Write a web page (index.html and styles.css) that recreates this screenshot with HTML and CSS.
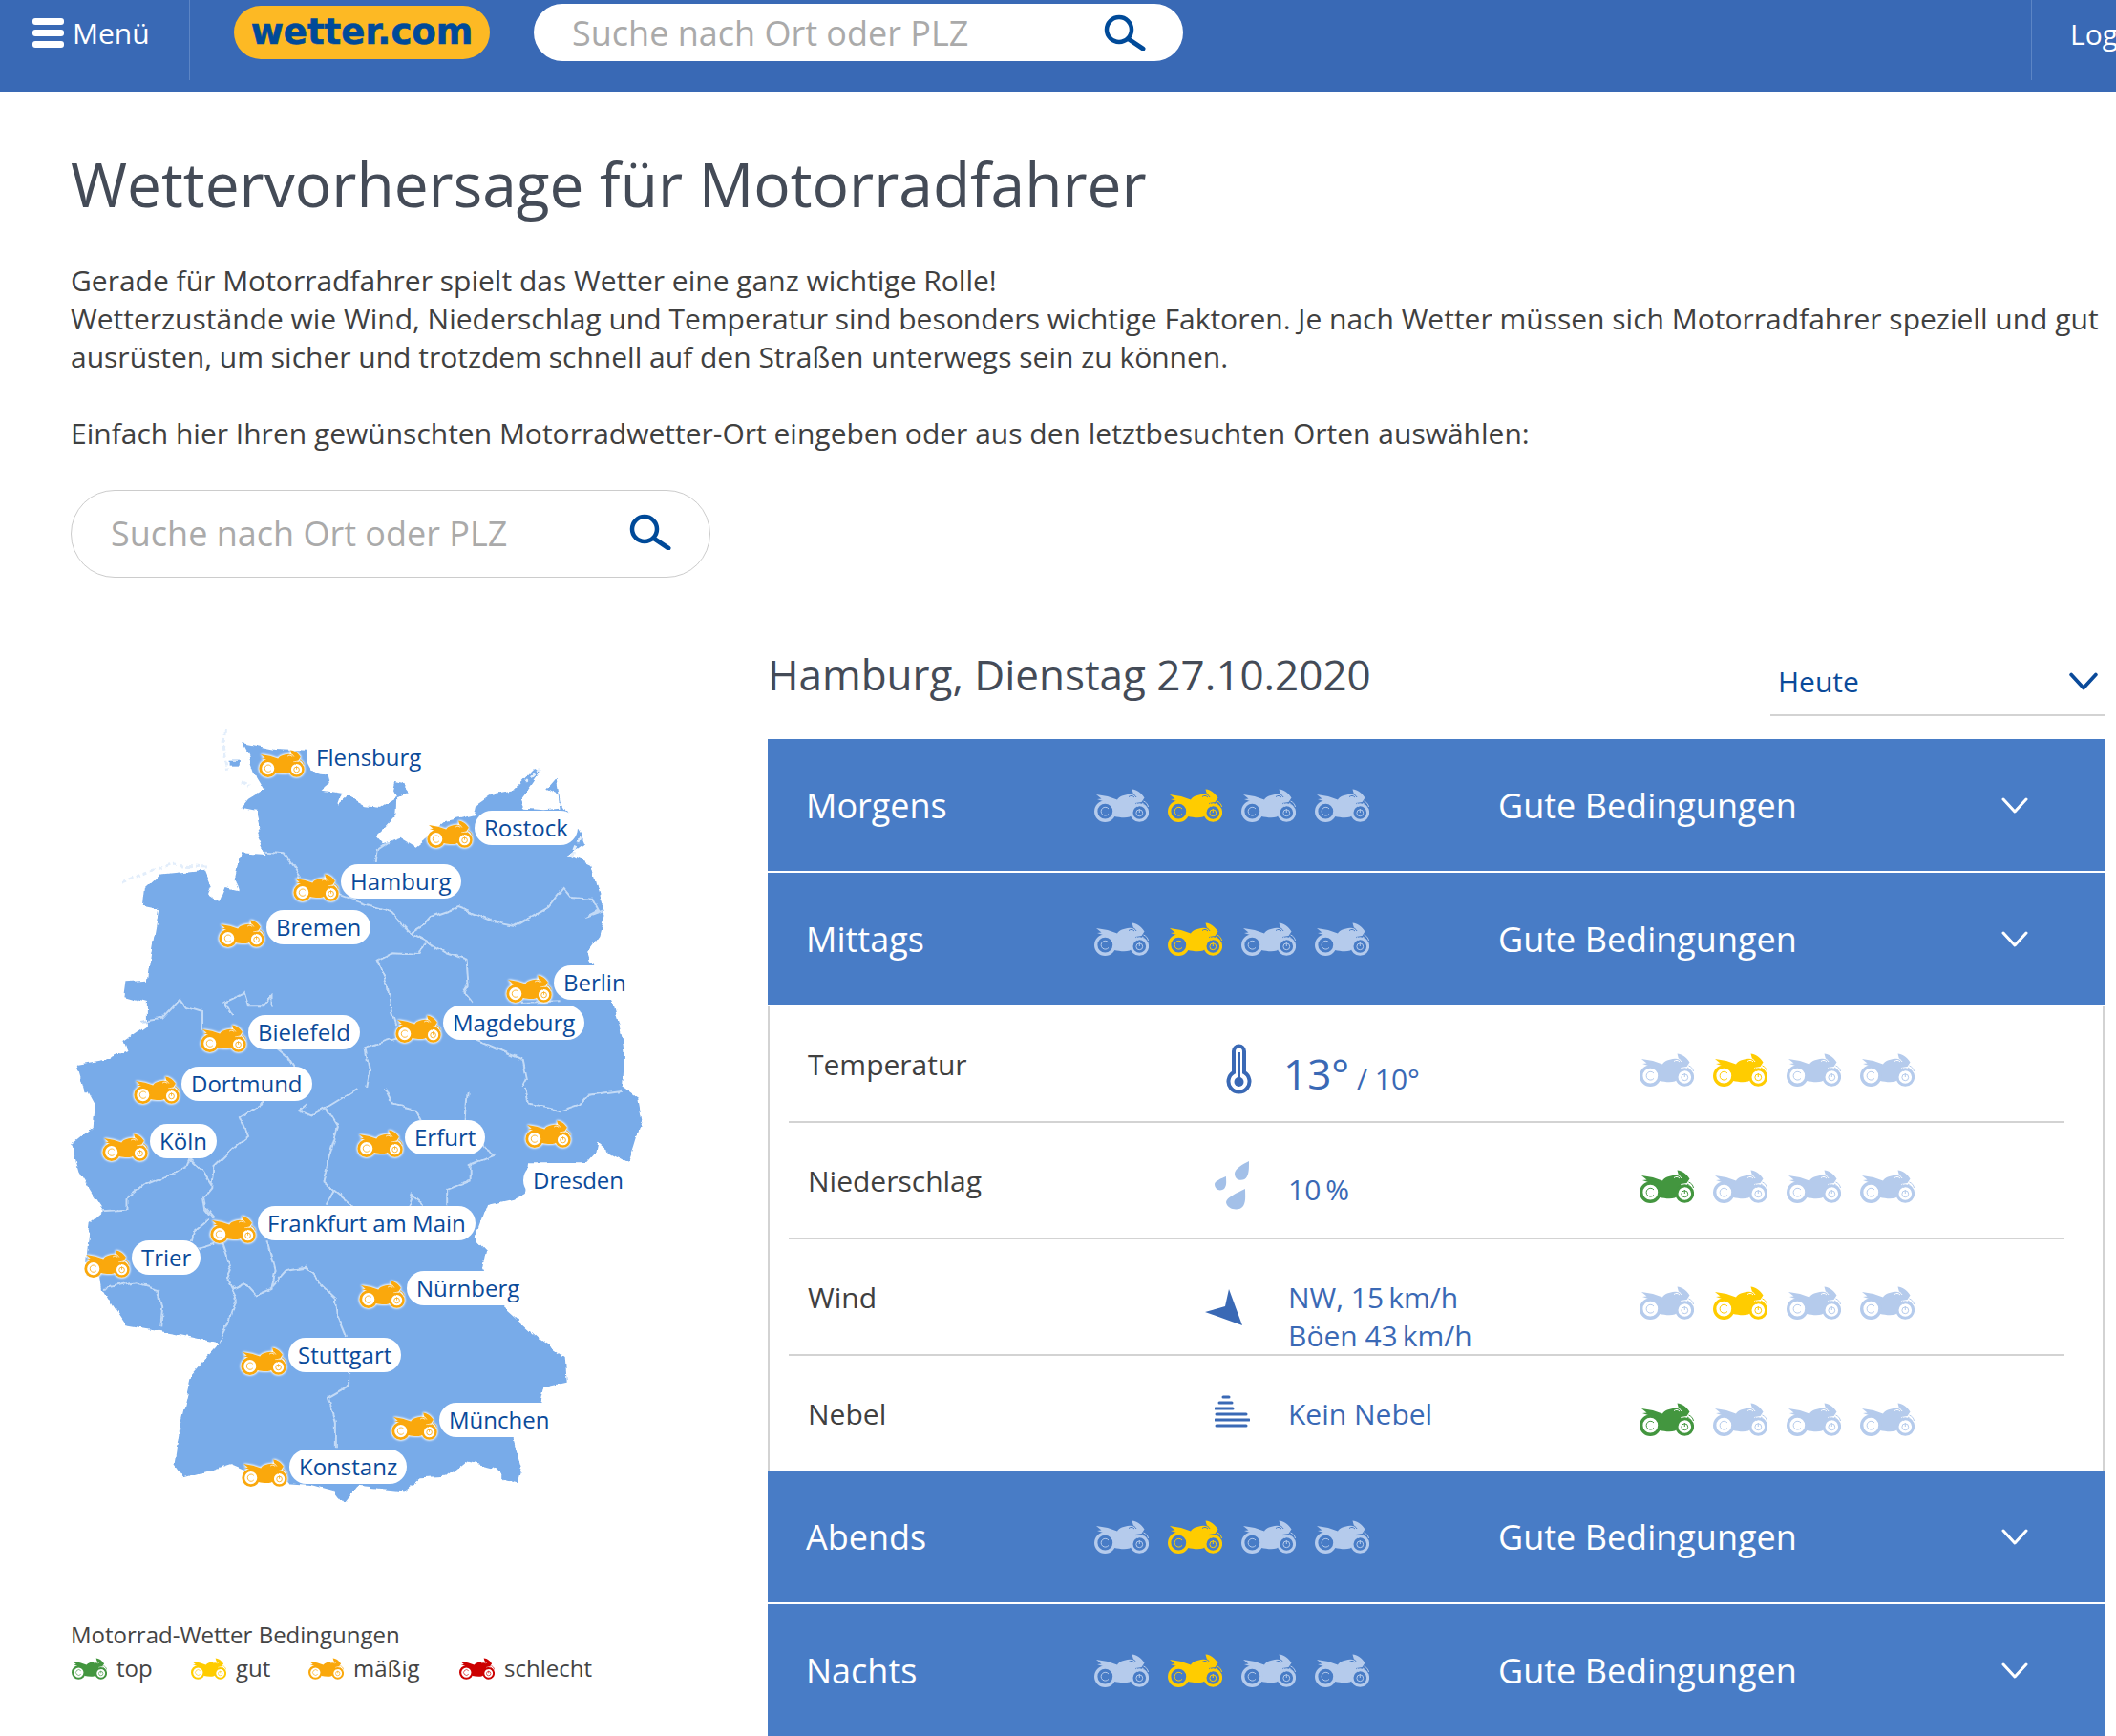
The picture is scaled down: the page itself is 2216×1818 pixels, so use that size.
FILE: index.html
```html
<!DOCTYPE html>
<html lang="de">
<head>
<meta charset="utf-8">
<title>Wettervorhersage für Motorradfahrer</title>
<link rel="stylesheet" href="styles.css">
</head>
<body>
<svg class="defs" width="0" height="0" aria-hidden="true">
  <filter id="rough" x="0" y="0" width="640" height="850" filterUnits="userSpaceOnUse">
    <feTurbulence type="fractalNoise" baseFrequency="0.07" numOctaves="3" seed="4" result="n"/>
    <feDisplacementMap in="SourceGraphic" in2="n" scale="7" xChannelSelector="R" yChannelSelector="G"/>
    <feGaussianBlur stdDeviation="0.6"/>
  </filter>
  <symbol id="bike" viewBox="0 0 57 35">
    <path fill="currentColor" d="M2 6 L14 8 L24 11.500 C26 8 31 6.500 37 5.800 L41 6 L39.500 .5 C44 .5 49 4 52.500 9.500 L49.500 14 L43 15 L44 20 C42 24 40 28 37 29.500 C32 31 26 30 21 29 L21 21 C18 18 14 16 9 15 L9 13 L3 11 L7.500 10.500 Z"/>
    <path class="gap" d="M36 8.500 C38 7 40 7 42 9 M39 5.500 C41 5.500 43 7 44 9"/>
    <path class="tone" d="M51.500 13 C54 14 56 16 56.500 19 M50 15 C52 16 53.500 17.500 54 19"/>
    <circle class="wheel" cx="11.300" cy="23.700" r="9.600" stroke-width="3.400"/>
    <path class="tone" stroke-width="2.600" d="M15 21 A4.400 4.400 0 1 0 15 26.400"/>
    <circle class="wheel" cx="47.300" cy="25" r="8.300" stroke-width="3"/>
    <path class="tone" stroke-width="3" d="M44 15 L46 19"/>
    <circle class="tone" cx="47.300" cy="25.300" r="3.400" stroke-width="1.800"/>
    <path class="tone" stroke-width="1.800" d="M47.300 21 V25"/>
  </symbol>
  <symbol id="chev" viewBox="0 0 28 17">
    <path d="M2 2 L14 15 L26 2" fill="none" stroke="currentColor" stroke-linecap="round" stroke-linejoin="round"/>
  </symbol>
  <symbol id="lens" viewBox="0 0 44 38">
    <circle cx="16" cy="16" r="13" fill="none" stroke="currentColor" stroke-width="4.500"/>
    <path d="M26 26 L41 36" fill="none" stroke="currentColor" stroke-width="5" stroke-linecap="round"/>
  </symbol>
</svg>

<header class="topbar">
  <div class="menu">
    <span class="burger"><i></i><i></i><i></i></span>
    <span>Menü</span>
  </div>
  <div class="logo">wetter.com</div>
  <div class="topsearch">
    <span>Suche nach Ort oder PLZ</span>
    <svg class="lens"><use href="#lens"/></svg>
  </div>
  <div class="login">Login</div>
</header>

<main class="page">
  <h1>Wettervorhersage für Motorradfahrer</h1>
  <p class="intro">Gerade für Motorradfahrer spielt das Wetter eine ganz wichtige Rolle!<br>Wetterzustände wie Wind, Niederschlag und Temperatur sind besonders wichtige Faktoren. Je nach Wetter müssen sich Motorradfahrer speziell und gut ausrüsten, um sicher und trotzdem schnell auf den Straßen unterwegs sein zu können.</p>
  <p class="intro second">Einfach hier Ihren gewünschten Motorradwetter-Ort eingeben oder aus den letztbesuchten Orten auswählen:</p>
  <div class="pagesearch">
    <span>Suche nach Ort oder PLZ</span>
    <svg class="lens"><use href="#lens"/></svg>
  </div>

  <div class="columns">
    <section class="left">
      <div class="map">
        <svg class="germany" viewBox="0 0 640 850" width="640" height="850">
          <g filter="url(#rough)">
          <g transform="scale(0.4082 0.3333)">
            <path class="land" d="M475 115 L520 125 L560 135 L640 140 L650 200 L695 215 L700 240 L680 260 L730 270 L720 305 L745 280 L790 310 L830 315 L860 290 L885 275 L905 275 L885 245 L865 240 L860 265 L870 290 L868 340 L835 385 L818 405 L835 430 L880 410 L920 440 L950 410 L1000 360 L1070 340 L1075 310 L1110 280 L1170 265 L1190 240 L1225 195 L1240 205 L1215 250 L1190 290 L1200 320 L1250 325 L1290 320 L1285 280 L1255 260 L1280 225 L1290 300 L1340 400 L1350 430 L1310 465 L1370 500 L1385 570 L1405 650 L1390 720 L1360 770 L1370 810 L1425 925 L1450 1040 L1455 1100 L1450 1210 L70 1210 L50 1125 L120 1110 L180 1080 L170 1050 L230 1000 L230 930 L170 910 L175 865 L230 860 L240 780 L260 640 L220 630 L225 570 L260 530 L380 515 L395 560 L385 590 L415 615 L430 570 L465 580 L455 540 L470 460 L535 465 L510 400 L520 380 L510 330 L470 320 L490 290 L530 260 L510 220 L490 150 Z"/>
            <path class="land" d="M440 170 h30 v15 h-30 Z"/>
            <path class="isles" d="M165 552 L240 515 L300 495 L390 505 M430 75 L425 130 L435 200 M470 240 L490 250 M1240 195 L1205 235 M1320 470 L1340 410"/>
            <path class="border" d="M535 455 L580 460 L610 510 L625 540 M720 590 L790 620 L850 640 L880 680 L905 710 L945 735 L1000 775 L1050 795 L1055 880 L1045 900 L1065 930 M815 490 L820 450 L850 425 M905 710 L945 680 L960 660 L1030 630 L1090 660 L1130 680 L1175 690 L1260 630 L1300 570 L1320 600 L1370 605 L1385 640 L1355 660 L1400 640 M945 740 L930 780 L860 775 L820 800 L850 880 L860 960 L870 1000 M1060 1040 L1120 1070 L1195 1110 L1205 1170 L1190 1205 M870 1040 L790 1070 L800 1140 L790 1205 M215 990 L270 980 L315 920 L330 945 L370 960 L370 1010 M450 970 L430 930 L480 900 L490 940 L530 940 L550 910 L550 950 M550 1060 L590 1100 L610 1140 L625 1205 M1190 930 L1290 925"/>
          </g>
          <g transform="translate(0 400) scale(0.4082 0.3333)">
            <path class="land" d="M1450 -6 L1490 30 L1500 100 L1480 180 L1465 235 L1420 205 L1385 170 L1380 200 L1355 235 L1210 235 L1200 330 L1170 350 L1100 370 L1070 470 L1100 510 L1090 570 L1140 680 L1195 740 L1240 790 L1300 840 L1305 920 L1250 935 L1240 990 L1170 1100 L1190 1190 L1180 1240 L1150 1230 L1120 1190 L1050 1170 L1000 1220 L930 1225 L890 1265 L855 1260 L770 1250 L735 1305 L710 1265 L650 1245 L590 1240 L530 1225 L480 1200 L440 1180 L470 1150 L540 1145 L400 1200 L325 1225 L300 1180 L315 1060 L345 900 L415 800 L300 770 L175 745 L140 680 L115 630 L110 590 L70 590 L80 470 L85 420 L120 385 L90 330 L55 260 L35 175 L90 120 L95 50 L70 -6 Z"/>
            <path class="border" d="M1200 0 L1210 50 L1290 70 L1340 50 L1360 20 L1450 5 M1050 10 L1045 100 L1095 190 L1120 210 L1060 240 L1060 290 L1000 320 L1000 370 M840 0 L860 50 L920 65 L935 100 M770 0 L690 60 L720 120 L700 200 L680 290 L710 320 L690 365 M710 320 L760 370 M900 370 L910 335 L940 365 M640 50 L620 70 L650 85 L690 60 M530 40 L470 90 L490 150 L450 190 L400 250 L395 310 L375 340 L380 380 L400 410 M115 385 L180 380 L180 345 L220 305 L330 250 L340 220 L375 260 L395 300 M390 410 L350 450 L345 480 M400 485 L360 500 M420 480 L445 570 L435 600 L460 660 L440 740 L415 800 M540 475 L560 570 L550 630 L510 650 L480 610 L445 630 M550 625 L590 570 L640 560 L680 620 L715 660 L720 720 L740 780 M745 890 L745 935 L695 970 L715 1050 L715 1135 M120 630 L200 610 L260 630 L270 690 L265 745"/>
          </g>
          </g>
        </svg>
        <div class="pin" style="left:211px;top:35px"><svg class="bike"><use href="#bike"/></svg><span class="tag">Flensburg</span></div>
        <div class="pin" style="left:387px;top:109px"><svg class="bike"><use href="#bike"/></svg><span class="tag">Rostock</span></div>
        <div class="pin" style="left:247px;top:165px"><svg class="bike"><use href="#bike"/></svg><span class="tag">Hamburg</span></div>
        <div class="pin" style="left:169px;top:213px"><svg class="bike"><use href="#bike"/></svg><span class="tag">Bremen</span></div>
        <div class="pin" style="left:470px;top:271px"><svg class="bike"><use href="#bike"/></svg><span class="tag">Berlin</span></div>
        <div class="pin" style="left:354px;top:313px"><svg class="bike"><use href="#bike"/></svg><span class="tag">Magdeburg</span></div>
        <div class="pin" style="left:150px;top:323px"><svg class="bike"><use href="#bike"/></svg><span class="tag">Bielefeld</span></div>
        <div class="pin" style="left:80px;top:377px"><svg class="bike"><use href="#bike"/></svg><span class="tag">Dortmund</span></div>
        <div class="pin" style="left:47px;top:437px"><svg class="bike"><use href="#bike"/></svg><span class="tag">Köln</span></div>
        <div class="pin" style="left:314px;top:433px"><svg class="bike"><use href="#bike"/></svg><span class="tag">Erfurt</span></div>
        <div class="pin" style="left:490px;top:423px"><svg class="bike"><use href="#bike"/></svg></div>
        <div class="pin" style="left:488px;top:478px"><span class="tag">Dresden</span></div>
        <div class="pin" style="left:160px;top:523px"><svg class="bike"><use href="#bike"/></svg><span class="tag">Frankfurt am Main</span></div>
        <div class="pin" style="left:28px;top:559px"><svg class="bike"><use href="#bike"/></svg><span class="tag">Trier</span></div>
        <div class="pin" style="left:316px;top:591px"><svg class="bike"><use href="#bike"/></svg><span class="tag">Nürnberg</span></div>
        <div class="pin" style="left:192px;top:661px"><svg class="bike"><use href="#bike"/></svg><span class="tag">Stuttgart</span></div>
        <div class="pin" style="left:350px;top:729px"><svg class="bike"><use href="#bike"/></svg><span class="tag">München</span></div>
        <div class="pin" style="left:193px;top:778px"><svg class="bike"><use href="#bike"/></svg><span class="tag">Konstanz</span></div>
      </div>
      <div class="legend">
        <div class="legend-title">Motorrad-Wetter Bedingungen</div>
        <div class="legend-row">
          <span class="legend-item top"><svg class="bike green"><use href="#bike"/></svg>top</span>
          <span class="legend-item good"><svg class="bike yellow"><use href="#bike"/></svg>gut</span>
          <span class="legend-item fair"><svg class="bike orange"><use href="#bike"/></svg>mäßig</span>
          <span class="legend-item bad"><svg class="bike red"><use href="#bike"/></svg>schlecht</span>
        </div>
      </div>
    </section>

    <section class="right">
      <div class="dayhead">
        <h2>Hamburg, Dienstag 27.10.2020</h2>
        <div class="select"><span>Heute</span><svg class="selchev"><use href="#chev"/></svg></div>
      </div>
      <div class="accordion">
        <div class="bar">
          <span class="bar-name">Morgens</span>
          <span class="bikes"><svg class="bike"><use href="#bike"/></svg><svg class="bike yellow"><use href="#bike"/></svg><svg class="bike"><use href="#bike"/></svg><svg class="bike"><use href="#bike"/></svg></span>
          <span class="bar-text">Gute Bedingungen</span>
          <svg class="barchev"><use href="#chev"/></svg>
        </div>
        <div class="bar">
          <span class="bar-name">Mittags</span>
          <span class="bikes"><svg class="bike"><use href="#bike"/></svg><svg class="bike yellow"><use href="#bike"/></svg><svg class="bike"><use href="#bike"/></svg><svg class="bike"><use href="#bike"/></svg></span>
          <span class="bar-text">Gute Bedingungen</span>
          <svg class="barchev"><use href="#chev"/></svg>
        </div>
        <div class="detail">
          <div class="row">
            <span class="label">Temperatur</span>
            <svg class="ico ico-temp" viewBox="0 0 27 53"><path d="M8 30 V8 a5.500 5.500 0 0 1 11 0 V30 a11 11 0 1 1 -11 0 Z" fill="none" stroke="currentColor" stroke-width="4"/><circle cx="13.500" cy="40" r="5" fill="currentColor"/><path d="M13.500 9 V38" stroke="currentColor" stroke-width="3"/></svg>
            <span class="value temp"><b>13°</b> / 10°</span>
            <span class="bikes"><svg class="bike"><use href="#bike"/></svg><svg class="bike yellow"><use href="#bike"/></svg><svg class="bike"><use href="#bike"/></svg><svg class="bike"><use href="#bike"/></svg></span>
          </div>
          <div class="row">
            <span class="label">Niederschlag</span>
            <svg class="ico ico-rain" viewBox="0 0 36 51"><path d="M36 0 C36 8 36 12 34 16 C31 22 21 21 21 13 C21 8 30 3 36 0 Z M12 16 C12 22 13 25 10 29 C6 32 0 30 0 24 C0 21 7 18 12 16 Z M32 29 C32 36 33 42 30 47 C26 53 13 51 12 43 C12 38 24 33 32 29 Z"/></svg>
            <span class="value rain">10&#8201;%</span>
            <span class="bikes"><svg class="bike green"><use href="#bike"/></svg><svg class="bike"><use href="#bike"/></svg><svg class="bike"><use href="#bike"/></svg><svg class="bike"><use href="#bike"/></svg></span>
          </div>
          <div class="row">
            <span class="label">Wind</span>
            <svg class="ico ico-wind" viewBox="0 0 39 38"><path d="M25 0 L39 38 L0 24 L21 18 Z"/></svg>
            <span class="value">NW, 15&#8201;km/h<br>Böen 43&#8201;km/h</span>
            <span class="bikes"><svg class="bike"><use href="#bike"/></svg><svg class="bike yellow"><use href="#bike"/></svg><svg class="bike"><use href="#bike"/></svg><svg class="bike"><use href="#bike"/></svg></span>
          </div>
          <div class="row">
            <span class="label">Nebel</span>
            <svg class="ico ico-fog" viewBox="0 0 37 34"><path d="M9 2 H15 M5 8 H18 M1 14 H19 M2 20 H33 M1 26 H36 M2 32 H33" stroke="currentColor" stroke-width="3" stroke-linecap="round"/></svg>
            <span class="value fog">Kein Nebel</span>
            <span class="bikes"><svg class="bike green"><use href="#bike"/></svg><svg class="bike"><use href="#bike"/></svg><svg class="bike"><use href="#bike"/></svg><svg class="bike"><use href="#bike"/></svg></span>
          </div>
        </div>
        <div class="bar">
          <span class="bar-name">Abends</span>
          <span class="bikes"><svg class="bike"><use href="#bike"/></svg><svg class="bike yellow"><use href="#bike"/></svg><svg class="bike"><use href="#bike"/></svg><svg class="bike"><use href="#bike"/></svg></span>
          <span class="bar-text">Gute Bedingungen</span>
          <svg class="barchev"><use href="#chev"/></svg>
        </div>
        <div class="bar">
          <span class="bar-name">Nachts</span>
          <span class="bikes"><svg class="bike"><use href="#bike"/></svg><svg class="bike yellow"><use href="#bike"/></svg><svg class="bike"><use href="#bike"/></svg><svg class="bike"><use href="#bike"/></svg></span>
          <span class="bar-text">Gute Bedingungen</span>
          <svg class="barchev"><use href="#chev"/></svg>
        </div>
      </div>
    </section>
  </div>
</main>
</body>
</html>
```

FILE: styles.css
```css
html, body { margin: 0; padding: 0; height: 100%; overflow: hidden; background: #fff; }
body { font-family: "Open Sans", "Noto Sans", sans-serif; color: #404040; }
.defs { position: absolute; }

.topbar { height: 96px; background: #3969b5; color: #fff; display: flex; align-items: flex-start; overflow: hidden; }
.menu { width: 198px; height: 84px; border-right: 1px solid #5c85c5; display: flex; align-items: center; font-size: 30px; flex: none; }
.burger { display: flex; flex-direction: column; gap: 5px; width: 33px; margin: -16px 9px 0 34px; }
.burger i { display: block; height: 7px; background: #fff; border-radius: 3px; }
.menu span:last-child { margin-top: -16px; }
.logo { margin: 6px 0 0 46px; width: 268px; height: 56px; flex: none; border-radius: 28px; background: #fdb924; color: #004a99; font-family: "DejaVu Sans", sans-serif; font-weight: 700; font-size: 37px; line-height: 56px; text-align: center; -webkit-text-stroke: 0.6px #004a99; }
.topsearch { margin: 4px 0 0 46px; width: 680px; height: 60px; flex: none; border-radius: 30px; background: #fff; display: flex; align-items: center; padding: 0 39px 0 40px; box-sizing: border-box; justify-content: space-between; font-size: 36px; color: #aaa; }
.lens { width: 44px; height: 38px; color: #004a99; display: block; }
.login { width: 89px; height: 84px; border-left: 1px solid #5c85c5; box-sizing: border-box; padding: 15px 0 0 40px; font-size: 30px; white-space: nowrap; flex: none; margin-left: 888px; }

.page { padding: 0 12px 0 74px; }
h1 { margin: 0; padding-top: 54px; font-weight: 400; font-size: 64px; line-height: 86px; color: #444b57; }
.intro { margin: 0; font-size: 30px; line-height: 40px; color: #404040; }
.intro:first-of-type { margin-top: 38px; }
.intro.second { margin-top: 40px; }
.pagesearch { margin-top: 39px; width: 670px; height: 92px; border: 1px solid #ccc; border-radius: 46px; box-sizing: border-box; display: flex; align-items: center; justify-content: space-between; padding: 0 40px 0 41px; font-size: 36px; color: #aaa; }
.pagesearch span { margin-top: -2px; }
.pagesearch .lens { margin-top: -4px; }

.columns { display: grid; grid-template-columns: 730px 1400px; margin-top: 55px; }
.left { padding-top: 80px; }
.map { position: relative; width: 640px; height: 850px; margin-left: -14px; }
.germany { display: block; }
.land { fill: #78abe9; }
.border { fill: none; stroke: #c3daf6; stroke-width: 2; vector-effect: non-scaling-stroke; }
.isles { fill: none; stroke: #e3eefb; stroke-width: 3; stroke-dasharray: 5 3; vector-effect: non-scaling-stroke; }
.pin { position: absolute; display: flex; align-items: flex-start; gap: 2px; }
.pin .bike { width: 48px; height: 29px; margin-top: 10px; color: #faa80c; --hole: #fff; filter: drop-shadow(0 0 1px #fff) drop-shadow(0 0 1px #fff); }
.tag { height: 36px; line-height: 35px; padding: 0 10px; border-radius: 18px; background: #fff; color: #0a4a9a; font-size: 24px; white-space: nowrap; }

.bike { width: 57px; height: 35px; display: block; flex: none; color: #b5cbec; --hole: #fff; }
.gap { fill: none; stroke: var(--hole); stroke-width: 1; }
.tone { fill: none; stroke: currentColor; stroke-width: 1; }
.wheel { fill: var(--hole); stroke: currentColor; }
.bike.yellow { color: #ffcc00; }
.bike.green { color: #43963f; }
.bike.orange { color: #faa80c; }
.bike.red { color: #cc0000; }

.legend { margin-top: 105px; font-size: 24px; line-height: 34px; color: #444; }
.legend-row { display: flex; margin-top: 1px; }
.legend-item { display: flex; align-items: center; gap: 10px; }
.legend-item .bike { width: 37px; height: 23px; margin-left: 1px; }
.legend-item.top { width: 125px; }
.legend-item.good { width: 123px; }
.legend-item.fair { width: 158px; }

.dayhead { display: flex; justify-content: space-between; height: 114px; }
h2 { margin: 0; font-weight: 400; font-size: 44px; line-height: 60px; padding-top: 16px; color: #444b57; }
.select { width: 350px; height: 90px; border-bottom: 2px solid #d3d3d3; box-sizing: border-box; display: flex; align-items: center; justify-content: space-between; padding: 18px 7px 0 8px; font-size: 30px; color: #0a4a9a; }
.selchev { width: 30px; height: 19px; stroke-width: 3.500; }
.accordion { display: flex; flex-direction: column; }
.bar { height: 138px; margin-bottom: 2px; background: #487cc6; color: #fff; display: flex; align-items: center; padding: 0 80px 0 40px; box-sizing: border-box; font-size: 36px; flex: none; }
.bar .bike { --hole: #487cc6; }
.bar-name { width: 302px; flex: none; }
.bar .bikes { width: 423px; flex: none; }
.bikes { display: flex; gap: 20px; }
.bar-text { flex: 1; }
.barchev { width: 28px; height: 17px; stroke-width: 3; color: #fff; }
.detail { height: 486px; border-left: 2px solid #d3d3d3; border-right: 2px solid #d3d3d3; box-sizing: border-box; padding: 0 40px 0 20px; flex: none; }
.row { height: 122px; box-sizing: border-box; border-bottom: 2px solid #d3d3d3; display: grid; grid-template-columns: 436px 87px 368px 1fr; align-items: start; }
.row:last-child { height: 120px; border-bottom: 0; }
.label { padding: 41px 0 0 20px; font-size: 30px; line-height: 40px; color: #404040; }
.ico { display: block; color: #3a69b5; fill: #3a69b5; }
.ico-temp { width: 27px; height: 53px; margin: 39px 0 0 22px; }
.ico-rain { width: 36px; height: 51px; margin: 40px 0 0 10px; fill: #a3c0e8; }
.ico-wind { width: 39px; height: 38px; margin: 52px 0 0 0; }
.ico-fog { width: 37px; height: 34px; margin: 41px 0 0 10px; }
.value { padding: 41px 0 0 0; font-size: 30px; line-height: 40px; color: #3a69b5; white-space: nowrap; }
.value.temp { padding: 50px 0 0 0; margin-left: -5px; font-size: 30px; }
.value.temp b { font-weight: 400; font-size: 44px; }
.value.rain { padding-top: 50px; }
.value.fog { padding-top: 41px; }
.row .bikes { padding-top: 49px; }
```
